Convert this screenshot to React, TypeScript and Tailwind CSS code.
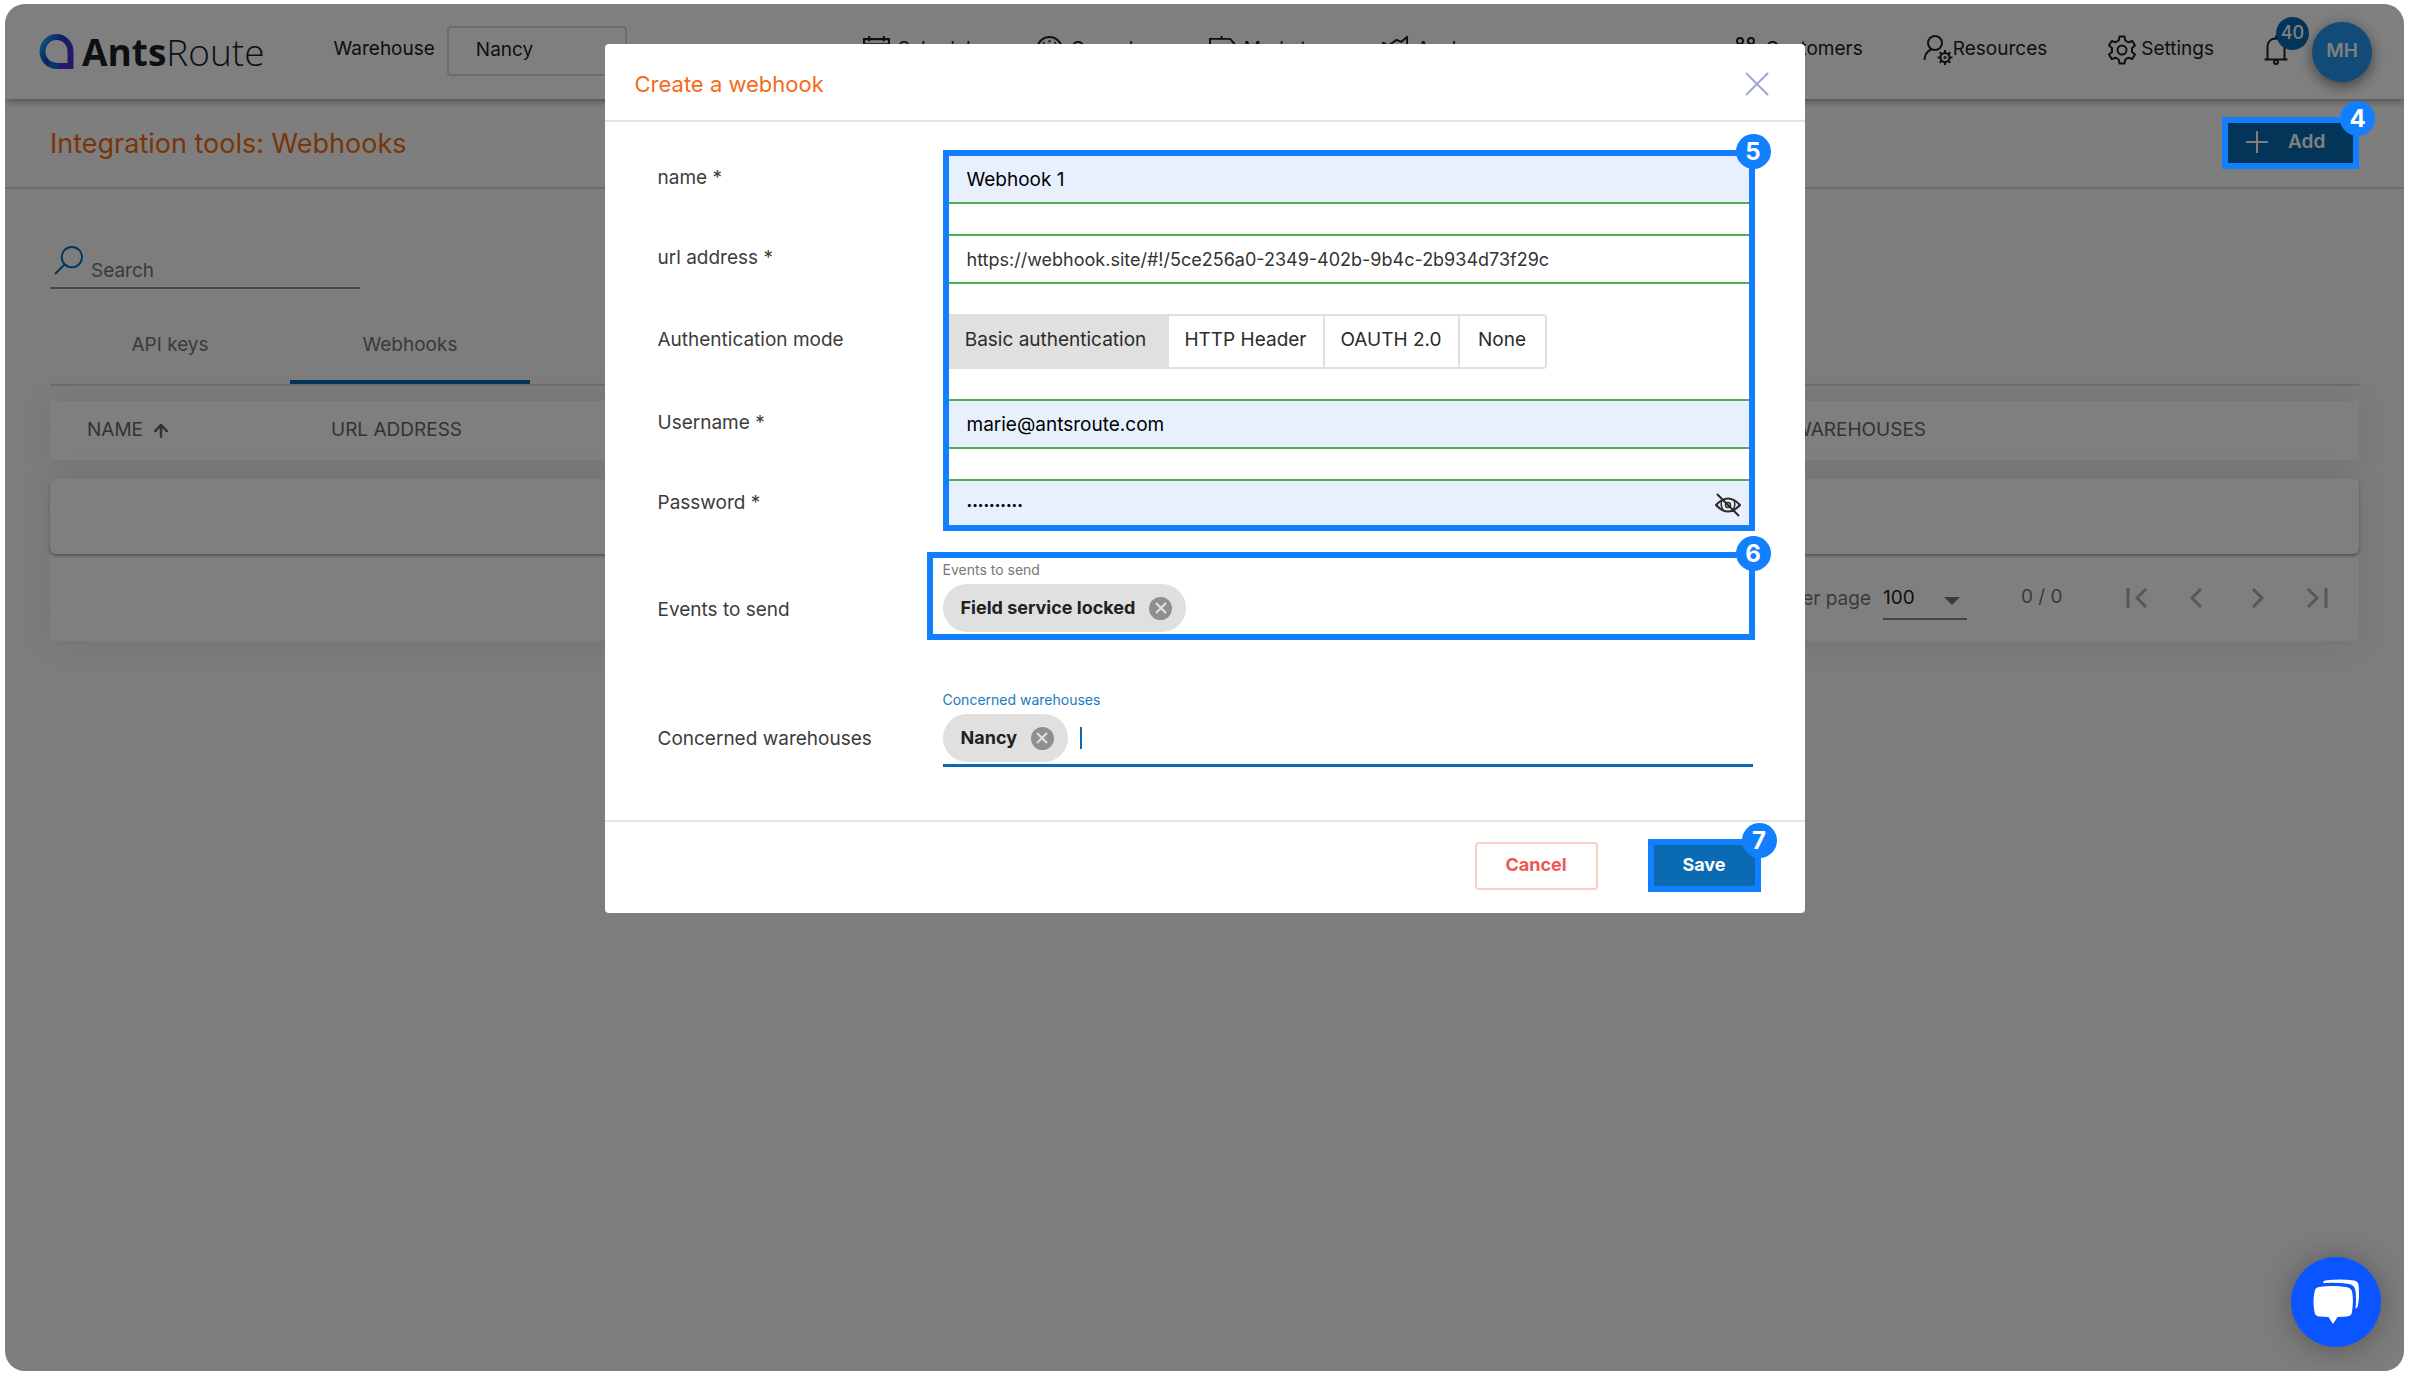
import React, { useState } from 'react';
import { ArrowUp } from 'lucide-react';

type IconProps = { className?: string };

const LogoMark: React.FC<IconProps> = ({ className }) => (
  <svg viewBox="0 0 35 35" className={className} fill="none" aria-hidden="true">
    <defs>
      <linearGradient id="logo" x1="0" y1="0.2" x2="1" y2="0.8">
        <stop offset="0" stopColor="#1f9ff0" />
        <stop offset="0.4" stopColor="#1a3fd0" />
        <stop offset="1" stopColor="#5a2ad8" />
      </linearGradient>
    </defs>
    <path d="M31.5 32V17.5A14 14.5 0 1 0 17.5 32Z" stroke="url(#logo)" strokeWidth="6" />
    <path d="M9 29Q14 32 20 32" stroke="#1b62d8" strokeWidth="6" />
  </svg>
);

const ScheduleIcon: React.FC<IconProps> = ({ className }) => (
  <svg viewBox="0 0 26 26" className={className} fill="none" stroke="currentColor" strokeWidth="2" aria-hidden="true">
    <path d="M1 3H25V25H1ZM1 8H25M6 0V5M20 0V5" />
  </svg>
);

const GaugeIcon: React.FC<IconProps> = ({ className }) => (
  <svg viewBox="0 0 26 26" className={className} fill="none" stroke="currentColor" strokeWidth="2" aria-hidden="true">
    <circle cx="13" cy="13" r="12" />
    <path d="M7 6L8 7M13 4V6M19 6L18 7M13 15L17 10" />
  </svg>
);

const SignIcon: React.FC<IconProps> = ({ className }) => (
  <svg viewBox="0 0 28 28" className={className} fill="none" stroke="currentColor" strokeWidth="2" aria-hidden="true">
    <path d="M1 3H22L27 9L22 15H1ZM13 0V3M13 15V28" />
  </svg>
);

const TrendIcon: React.FC<IconProps> = ({ className }) => (
  <svg viewBox="0 0 28 28" className={className} fill="none" stroke="currentColor" strokeWidth="2" aria-hidden="true">
    <path d="M0 7L4 8M8 9L15 4L20 6L26 1V14M1 14V26M8 16V26M15 12V26M22 14V26" />
  </svg>
);

const CustomersIcon: React.FC<IconProps> = ({ className }) => (
  <svg viewBox="0 0 22 26" className={className} fill="none" stroke="currentColor" strokeWidth="2" aria-hidden="true">
    <circle cx="5" cy="4" r="3" />
    <circle cx="16" cy="4" r="3" />
    <path d="M1 24V14Q5 7 10 14V24M12 24V14Q16 7 21 14V24" />
  </svg>
);

const ResourcesIcon: React.FC<IconProps> = ({ className }) => (
  <svg viewBox="0 0 30 32" className={className} fill="none" stroke="currentColor" strokeWidth="2" aria-hidden="true">
    <circle cx="12" cy="9" r="7" />
    <path d="M1.5 26Q1.500 19 8 15.500" />
    <circle cx="22" cy="23.500" r="4.500" />
    <circle cx="22" cy="23.500" r="0.600" />
    <path d="M22 16V19M22 28V31M14.500 23.500H17.500M26.500 23.500H29.500M16.700 18.200L18.800 20.300M25.200 26.700L27.300 28.800M27.300 18.200L25.200 20.300M18.800 26.700L16.700 28.800" />
  </svg>
);

const GearIcon: React.FC<IconProps> = ({ className }) => (
  <svg viewBox="0 0 30 30" className={className} fill="none" stroke="currentColor" strokeWidth="2" strokeLinejoin="round" aria-hidden="true">
    <circle cx="15" cy="15" r="4.500" />
    <path d="M12.500 1.500H17.500L18.300 5.500L21.500 7.300L25.300 6L28 10.500L25 13V17L28 19.500L25.300 24L21.500 22.700L18.300 24.500L17.500 28.500H12.500L11.700 24.500L8.500 22.700L4.700 24L2 19.500L5 17V13L2 10.500L4.700 6L8.500 7.300L11.700 5.500Z" />
  </svg>
);

const BellIcon: React.FC<IconProps> = ({ className }) => (
  <svg viewBox="0 0 24 30" className={className} fill="none" stroke="currentColor" strokeWidth="2" aria-hidden="true">
    <path d="M0.500 24.500H23.500M3.500 24V12C3.500 6.500 7 3.500 12 3.500S20.500 6.500 20.500 12V24M12 3.500V0.500" />
    <circle cx="12" cy="27" r="2" />
  </svg>
);

const SearchIcon: React.FC<IconProps> = ({ className }) => (
  <svg viewBox="0 0 30 30" className={className} fill="none" stroke="currentColor" strokeWidth="2" aria-hidden="true">
    <circle cx="18.500" cy="11.500" r="10.500" />
    <path d="M11 19L1 29" />
  </svg>
);

const EyeOffIcon: React.FC<IconProps> = ({ className }) => (
  <svg viewBox="0 0 26 24" className={className} fill="none" stroke="currentColor" strokeWidth="2" aria-hidden="true">
    <path d="M1 12Q13 -1 25 12Q13 25 1 12ZM2 1L24 23" />
    <path d="M7 7.500Q5 12 8 17M19 7.500Q21 12 18 17" strokeWidth="1.500" />
    <circle cx="13" cy="12" r="2.500" strokeWidth="1.500" />
  </svg>
);

const ChatIcon: React.FC<IconProps> = ({ className }) => (
  <svg viewBox="0 0 46 46" className={className} aria-hidden="true">
    <path d="M6 8Q20 6 33 8Q39 8.500 39.500 15Q40.500 23 39 33Q38.500 37 34 37.500L24.500 38L20 45L15.500 38L6 37.500Q2 37 1.500 33Q-0.500 23 1.500 13Q2 8.500 6 8Z" fill="#fff" />
    <path d="M10 4Q10 1.500 14 1.200Q28 -0.500 41 1.500Q45 2 45.500 6Q47 18 44.500 28L42.500 30Q43.500 20 42.500 12Q41.500 5.500 36 5Q24 3 10 4Z" fill="#fff" />
  </svg>
);

const Marker: React.FC<{ step: number }> = ({ step }) => (
  <span className="absolute -top-4 -right-4 flex size-[35px] items-center justify-center rounded-full bg-[#127fff] text-2xl font-bold text-white">
    {step}
  </span>
);

const Chip: React.FC<{ label: string }> = ({ label }) => (
  <span className="flex h-12 items-center gap-3.5 rounded-full bg-[#e0e0e0] pr-3.5 pl-[18px] text-lg font-bold text-[#212121]">
    {label}
    <button type="button" aria-label={`Remove ${label}`} className="flex size-[23px] items-center justify-center rounded-full bg-[#8f8f8f]">
      <svg viewBox="0 0 12 12" className="size-3" stroke="#e0e0e0" strokeWidth="2" aria-hidden="true">
        <path d="M1 1L11 11M11 1L1 11" />
      </svg>
    </button>
  </span>
);

const mainNav = [
  { label: 'Schedule', Icon: ScheduleIcon },
  { label: 'Console', Icon: GaugeIcon },
  { label: 'Market', Icon: SignIcon },
  { label: 'Analyse', Icon: TrendIcon },
];

const authModes = [
  { label: 'Basic authentication', width: 'w-[224px]' },
  { label: 'HTTP Header', width: 'w-[156px]' },
  { label: 'OAUTH 2.0', width: 'w-[135px]' },
  { label: 'None', width: 'w-[85px]' },
];

const pagerIcons = [
  { label: 'First page', d: 'M2 1V21M20 2L11 11L20 20' },
  { label: 'Previous page', d: 'M15 2L6 11L15 20' },
  { label: 'Next page', d: 'M7 2L16 11L7 20' },
  { label: 'Last page', d: 'M20 1V21M2 2L11 11L2 20' },
];

const inputClass = 'block h-[50px] w-full border-y-2 border-[#4caf50] px-6 outline-none';
const labelClass = 'pb-0.5 text-[19px] text-[#3c3c3c]';

const Header: React.FC = () => (
  <header className="relative z-[1] flex h-[95px] items-center bg-white pl-[34px] text-[19px] text-[#212121] shadow-[0_2px_8px_rgba(0,0,0,0.4)]">
    <a href="#home" className="flex items-center gap-2">
      <LogoMark className="size-[35px]" />
      <span className="font-['Open_Sans',sans-serif] text-[37px] font-light text-[#1b1f24]">
        <b className="font-bold">Ants</b>Route
      </span>
    </a>
    <label htmlFor="warehouse" className="ml-[69px] pb-1">Warehouse</label>
    <select id="warehouse" className="mb-0.5 ml-3 h-[50px] w-[180px] appearance-none rounded-sm border-2 border-[#d8d8d8] pl-[27px]">
      <option>Nancy</option>
    </select>
    <nav className="flex flex-1 items-center pb-1">
      <div className="ml-[236px] flex">
        {mainNav.map(({ label, Icon }) => (
          <a key={label} href={`#${label}`} className="flex w-[173px] items-center gap-2">
            <Icon className="size-[27px]" /> {label}
          </a>
        ))}
      </div>
      <div className="mr-[50px] ml-auto flex gap-[60px]">
        <a href="#customers" className="flex items-center gap-2">
          <CustomersIcon className="h-[26px] w-[22px]" /> Customers
        </a>
        <a href="#resources" className="flex items-center">
          <ResourcesIcon className="h-8 w-[30px]" /> Resources
        </a>
        <a href="#settings" className="flex items-center gap-1">
          <GearIcon className="size-[30px]" /> Settings
        </a>
      </div>
    </nav>
    <button type="button" aria-label="Notifications" className="relative mr-6 mb-1">
      <BellIcon className="h-[30px] w-6" />
      <span className="absolute -top-[18px] left-3 flex size-[33px] items-center justify-center rounded-full bg-[#066bb3] text-lg font-medium text-white">
        40
      </span>
    </button>
    <button type="button" className="mr-8 size-[60px] rounded-full bg-[#2494f0] text-[19px] font-semibold text-white shadow-[0_4px_14px_rgba(0,0,0,0.5)]">
      MH
    </button>
  </header>
);

const WebhookModal: React.FC = () => {
  const [mode, setMode] = useState('Basic authentication');

  return (
    <div role="dialog" aria-labelledby="modal-title" className="w-[1200px] max-w-full rounded bg-white">
      <div className="flex h-[78px] items-center justify-between border-b-2 border-[#e2e2e2] pt-1 pr-9 pl-[30px]">
        <h2 id="modal-title" className="text-[22px] text-[#f26b21]">Create a webhook</h2>
        <button type="button" aria-label="Close">
          <svg viewBox="0 0 24 24" className="size-6" stroke="#9fa8d0" strokeWidth="2" strokeLinecap="round" aria-hidden="true">
            <path d="M1.500 1.500L22.500 22.500M22.500 1.500L1.500 22.500" />
          </svg>
        </button>
      </div>

      <form className="pt-8 pr-[52px] pb-[53px] pl-[53px]">
        <div className="relative grid grid-cols-[285px_1fr] items-center gap-y-[30px]">
          <label htmlFor="name" className={labelClass}>name *</label>
          <input id="name" defaultValue="Webhook 1" className={`${inputClass} bg-[#e8f0fe] text-[19px] text-black`} />

          <label htmlFor="url" className={labelClass}>url address *</label>
          <input id="url" defaultValue="https://webhook.site/#!/5ce256a0-2349-402b-9b4c-2b934d73f29c" className={`${inputClass} text-lg text-[#333]`} />

          <span className={labelClass}>Authentication mode</span>
          <div className="flex h-[55px] w-fit overflow-hidden rounded border-2 border-[#e0e0e0]">
            {authModes.map(({ label, width }) => (
              <button
                key={label}
                type="button"
                onClick={() => setMode(label)}
                className={`${width} border-r-2 border-[#e0e0e0] pb-0.5 text-[19px] text-[#2b2b2b] last:border-r-0 ${mode === label ? 'bg-[#e0e0e0]' : 'bg-white'}`}
              >
                {label}
              </button>
            ))}
          </div>

          <label htmlFor="username" className={labelClass}>Username *</label>
          <input id="username" defaultValue="marie@antsroute.com" className={`${inputClass} bg-[#e8f0fe] text-[19px] text-black`} />

          <label htmlFor="password" className={labelClass}>Password *</label>
          <div className="relative">
            <input id="password" type="password" defaultValue="webhook-01" className={`${inputClass} bg-[#e8f0fe] text-[10px] text-black`} />
            <button type="button" aria-label="Show password" className="absolute top-3.5 right-3 text-[#2b2b2b]">
              <EyeOffIcon className="h-6 w-[26px]" />
            </button>
          </div>

          <div className="pointer-events-none absolute -top-1 -right-0.5 -bottom-0.5 left-[285px] border-[6px] border-[#127fff]">
            <div className="absolute -inset-1.5">
              <Marker step={5} />
            </div>
          </div>
        </div>

        <div className="mt-[31px] grid grid-cols-[285px_1fr] items-end">
          <label htmlFor="events" className="pb-2 text-[19px] text-[#3c3c3c]">Events to send</label>
          <div className="relative">
            <span className="block text-sm text-[#777]">Events to send</span>
            <div className="mt-1 flex h-12 items-center">
              <Chip label="Field service locked" />
              <input id="events" className="min-w-0 flex-1 outline-none" />
            </div>
            <div className="pointer-events-none absolute -top-2 -right-0.5 -bottom-2 -left-4 border-[6px] border-[#127fff]">
              <div className="absolute -inset-1.5">
                <Marker step={6} />
              </div>
            </div>
          </div>
        </div>

        <div className="mt-[58px] grid grid-cols-[285px_1fr] items-end">
          <label htmlFor="warehouses" className="pb-3.5 text-[19px] text-[#3c3c3c]">Concerned warehouses</label>
          <div className="border-b-[3px] border-[#0b69b0]">
            <span className="block text-sm text-[#1a7abf]">Concerned warehouses</span>
            <div className="mt-1 flex items-center pb-0.5">
              <Chip label="Nancy" />
              <span className="ml-3 h-[22px] w-0.5 bg-[#0b69b0]" />
              <input id="warehouses" className="min-w-0 flex-1 outline-none" />
            </div>
          </div>
        </div>
      </form>

      <div className="flex h-[93px] items-center justify-end gap-[50px] border-t-2 border-[#dfe5e5] pr-[44px] pb-1 text-lg font-bold">
        <button type="button" className="h-12 w-[123px] rounded border-2 border-[#fbcdc8] pb-0.5 text-[#f25651]">Cancel</button>
        <button type="submit" className="relative h-[53px] w-[113px] border-[6px] border-[#127fff] bg-[#0a6bb3] pb-0.5 text-white">
          Save
          <span className="absolute -inset-1.5">
            <Marker step={7} />
          </span>
        </button>
      </div>
    </div>
  );
};

const App: React.FC = () => {
  return (
    <div className="flex min-h-screen flex-col bg-white px-[5px] pt-1 pb-[3px] font-['Inter','Liberation_Sans',sans-serif]">
      <div className="relative flex-1 overflow-hidden rounded-[20px] bg-[#fafafa]">
        <Header />

        <div className="flex h-[90px] items-center justify-between border-b-2 border-[#dcdcdc] bg-[#fdfdfd] px-[45px]">
          <h1 className="pt-0.5 text-[27px] text-[#f26b10]">Integration tools: Webhooks</h1>
          <button type="button" className="relative flex h-[52px] w-[137px] items-center gap-5 bg-[#066bb3] pb-0.5 pl-6 text-[19px] font-semibold text-white">
            <svg viewBox="0 0 22 22" className="size-[22px]" stroke="currentColor" strokeWidth="2" aria-hidden="true">
              <path d="M11 0V22M0 11H22" />
            </svg>
            Add
            <span className="absolute inset-0 z-20 border-[6px] border-[#127fff]">
              <span className="absolute -inset-1.5">
                <Marker step={4} />
              </span>
            </span>
          </button>
        </div>

        <main className="px-[45px] pt-[52px] text-[19px]">
          <div className="flex h-12 w-[310px] items-end gap-2 border-b-2 border-[#8c8c8c] pl-1">
            <SearchIcon className="mb-3 size-[29px] text-[#066bb3]" />
            <input aria-label="Search" placeholder="Search" className="mb-0.5 min-w-0 flex-1 outline-none placeholder:text-[#757575]" />
          </div>

          <div className="mt-[17px] flex h-20 border-b-2 border-[#dcdce0] text-[#757575]">
            <button type="button" className="w-60">API keys</button>
            <button type="button" className="w-60 border-b-4 border-[#066bb3] pt-1">Webhooks</button>
          </div>

          <table className="mt-[15px] w-full bg-white text-left text-[#666] shadow-[0_0_30px_rgba(80,90,160,0.14)]">
            <thead>
              <tr className="h-[59px]">
                <th className="w-[281px] pl-[37px] font-normal">
                  <span className="flex items-center gap-2">NAME <ArrowUp size={20} strokeWidth={3} /></span>
                </th>
                <th className="font-normal">URL ADDRESS</th>
                <th className="w-[691px] font-normal">CONCERNED WAREHOUSES</th>
              </tr>
            </thead>
          </table>

          <div className="shadow-[0_0_30px_rgba(80,90,160,0.14)]">
            <div className="relative mt-[19px] h-[75px] rounded-md bg-white shadow-[0_2px_3px_rgba(0,0,0,0.35)]" />
            <div className="flex h-[87px] items-center justify-end bg-white pt-1 pr-[21px] text-[#757575]">
              <label htmlFor="per-page">Items per page</label>
              <div className="relative ml-3">
                <select id="per-page" defaultValue="100" className="h-10 w-[84px] appearance-none border-b-2 border-[#8c8c8c] text-[#212121]">
                  <option>100</option>
                </select>
                <span className="pointer-events-none absolute top-[17px] right-[7px] border-x-8 border-t-8 border-x-transparent border-t-[#757575]" />
              </div>
              <span className="ml-[54px] w-[47px] pb-1">0 / 0</span>
              <div className="ml-[48px] flex gap-[18px]">
                {pagerIcons.map(({ label, d }) => (
                  <button key={label} type="button" aria-label={label} className="flex h-10 w-[42px] items-center justify-center pb-1">
                    <svg viewBox="0 0 22 22" className="size-[22px]" fill="none" stroke="#b0b0b0" strokeWidth="3" aria-hidden="true">
                      <path d={d} />
                    </svg>
                  </button>
                ))}
              </div>
            </div>
          </div>
        </main>

        <div className="absolute inset-0 z-10 flex items-start justify-center bg-black/50 pt-10">
          <WebhookModal />
        </div>

        <button type="button" aria-label="Open chat" className="absolute right-[23px] bottom-6 z-20 flex size-[90px] items-center justify-center rounded-full bg-[#0a55ff] shadow-[0_2px_30px_rgba(0,0,0,0.3)]">
          <ChatIcon className="size-[46px]" />
        </button>
      </div>
    </div>
  );
};

export default App;
